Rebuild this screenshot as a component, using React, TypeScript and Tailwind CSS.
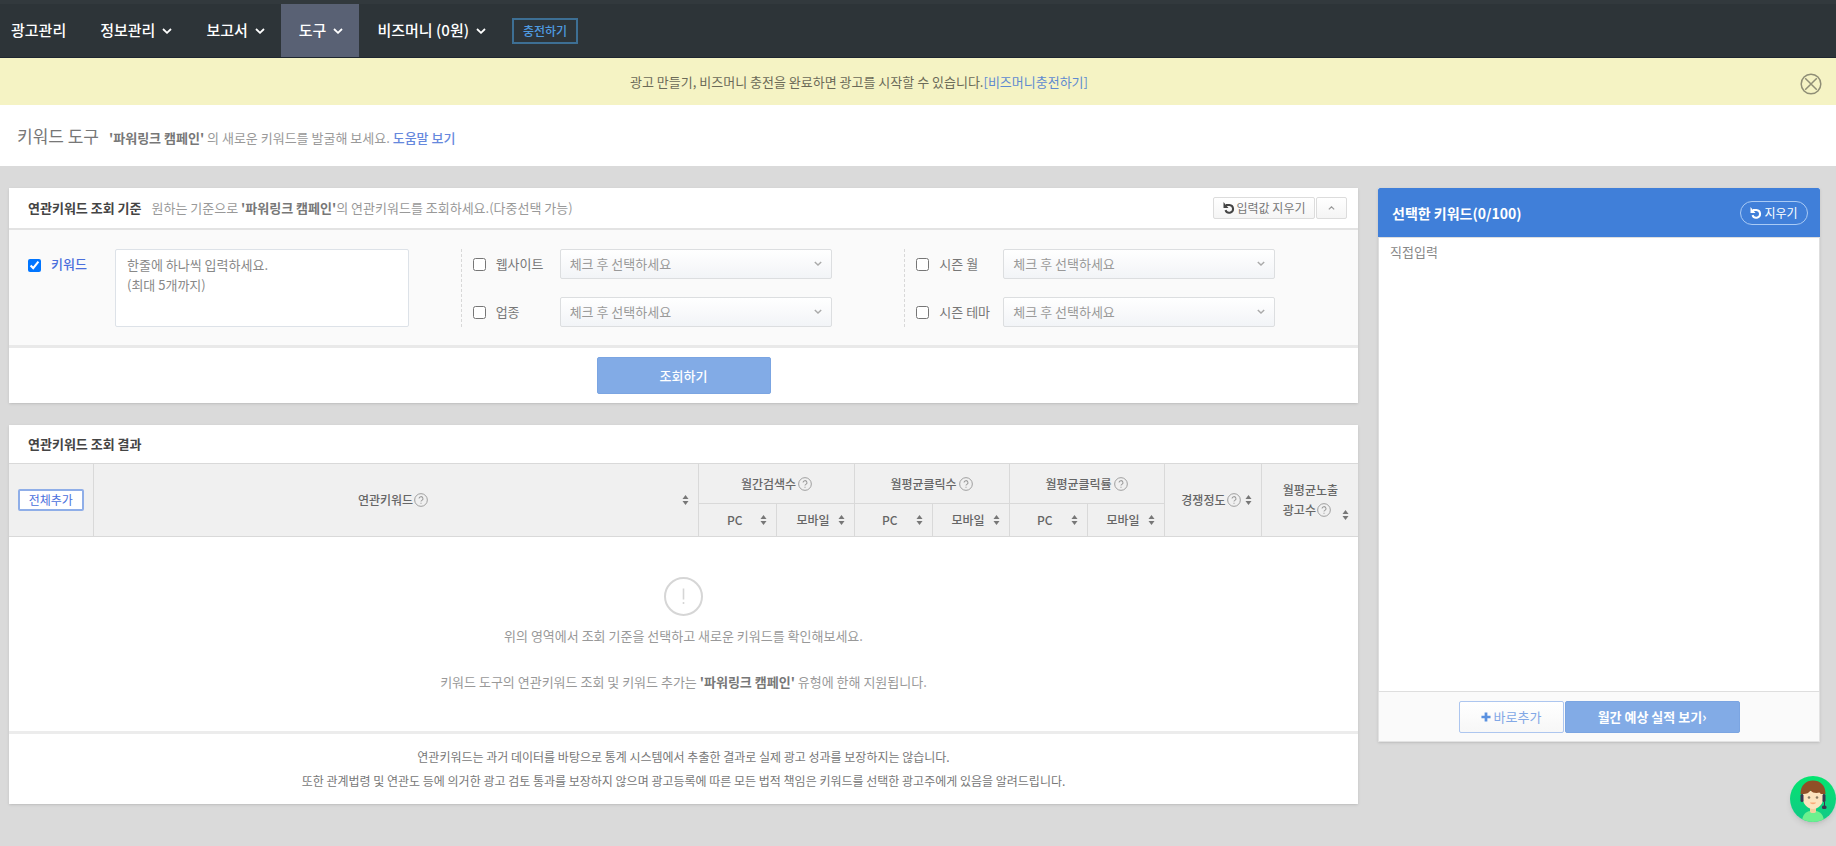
import React, { useState } from 'react';

interface MenuItem {
  label: string;
  active?: boolean;
}

interface Criteria {
  id: string;
  label: string;
}

const MENU: MenuItem[] = [
  { label: '정보관리' },
  { label: '보고서' },
  { label: '도구', active: true },
  { label: '비즈머니 (0원)' },
];

const CRITERIA: Criteria[][] = [
  [
    { id: 'website', label: '웹사이트' },
    { id: 'industry', label: '업종' },
  ],
  [
    { id: 'month', label: '시즌 월' },
    { id: 'theme', label: '시즌 테마' },
  ],
];

const GROUPS = ['월간검색수', '월평균클릭수', '월평균클릭률'];

const Chevron = ({ className }: { className: string }) => (
  <svg className={className} viewBox="0 0 10 6" fill="none" stroke="currentColor" strokeWidth="1.8" aria-hidden="true">
    <path d="M1 1l4 3.8L9 1" />
  </svg>
);

const Undo = ({ className }: { className: string }) => (
  <svg className={className} viewBox="0 0 12 12" fill="none" stroke="currentColor" strokeWidth="2" aria-hidden="true">
    <path d="M3 3h3.4a3.9 3.9 0 1 1-3.9 5.200" />
    <path d="M0.500 0v6h5z" fill="currentColor" stroke="none" />
  </svg>
);

const Help = () => (
  <svg className="inline-block h-[14px] w-[14px] shrink-0 align-middle text-[#999]" viewBox="0 0 15 15" fill="none" stroke="currentColor" aria-hidden="true">
    <circle cx="7.5" cy="7.5" r="6.8" />
    <path d="M5.4 6a2.1 2.1 0 1 1 3 1.900c-.6.3-.9.6-.9 1.300M7.500 10.400v1.200" strokeWidth="1.100" />
  </svg>
);

const Sort = () => (
  <button type="button" aria-label="정렬" className="shrink-0 text-[#777]">
    <svg className="h-[10px] w-[7px]" viewBox="0 0 7 10" fill="currentColor" aria-hidden="true">
      <path d="M3.5 0L6.500 4h-6zM3.500 10L0.500 6h6z" />
    </svg>
  </button>
);

const Nav = () => (
  <nav className="flex h-[58px] items-stretch border-t-4 border-b border-t-[#32393d] border-b-[#1e2630] bg-[#2d3438] pl-[11px] text-[15px] font-medium text-white">
    <a href="#" className="flex items-center pr-4">
      광고관리
    </a>
    {MENU.map(item => (
      <a
        key={item.label}
        href="#"
        className={`flex items-center gap-[7px] pr-4 pl-[18px] ${item.active ? 'bg-[#596174]' : ''}`}
      >
        {item.label}
        <Chevron className="h-[6px] w-[10px]" />
      </a>
    ))}
    <button type="button" className="ml-[10px] h-[26px] w-[66px] self-center border-2 border-[#3d6f94] text-xs text-[#4f9be0]">
      충전하기
    </button>
  </nav>
);

const Notice = ({ onClose }: { onClose: () => void }) => (
  <div className="flex h-[47px] items-center bg-[#f5f3c4] pr-[14px]">
    <p className="flex-1 pl-3 text-center text-[#6b6a58]">
      광고 만들기, 비즈머니 충전을 완료하면 광고를 시작할 수 있습니다.
      <a href="#" className="text-[#5f8ad0]">
        [비즈머니충전하기]
      </a>
    </p>
    <div className="w-[94px]" />
    <button type="button" aria-label="닫기" onClick={onClose} className="pt-1 text-[#8f8e76]">
      <svg className="h-[22px] w-[22px]" viewBox="0 0 22 22" fill="none" stroke="currentColor" strokeWidth="1.5" aria-hidden="true">
        <circle cx="11" cy="11" r="9.8" />
        <path d="M5.2 5.2l11.6 11.6M16.8 5.2L5.2 16.8" />
      </svg>
    </button>
  </div>
);

const SelectRow = ({ id, label }: Criteria) => (
  <div className="flex h-[30px] items-center">
    <input id={id} type="checkbox" className="h-[13px] w-[13px]" />
    <label htmlFor={id} className="w-[74px] pl-[10px] text-[#777]">
      {label}
    </label>
    <div className="relative w-[272px]">
      <select
        aria-label={label}
        className="block h-[30px] w-full appearance-none rounded-xs border border-[#dcdee0] bg-linear-to-b from-white to-[#f2f4f7] px-[9px] text-[#999]"
      >
        <option>체크 후 선택하세요</option>
      </select>
      <Chevron className="pointer-events-none absolute top-3 right-[10px] h-[5px] w-[8px] text-[#aaa]" />
    </div>
  </div>
);

const CriteriaPanel = () => {
  const [open, setOpen] = useState<boolean>(true);
  const [keywords, setKeywords] = useState<string>('');

  return (
    <section className="bg-white shadow-sm">
      <div className="flex h-[42px] items-center border-b-2 border-[#e3e3e3] pr-[11px] pl-[19px]">
        <h2 className="font-bold text-[#444]">연관키워드 조회 기준</h2>
        <p className="flex-1 pl-[10px] text-[#999]">
          원하는 기준으로 <b className="text-[#777]">'파워링크 캠페인'</b>의 연관키워드를 조회하세요.(다중선택 가능)
        </p>
        <button
          type="button"
          onClick={() => setKeywords('')}
          className="flex h-[22px] w-[102px] items-center justify-center gap-[2px] rounded-xs border border-[#dcdcdc] bg-linear-to-b from-white to-[#f5f5f5] text-xs text-[#777]"
        >
          <Undo className="h-[12px] w-[12px] text-[#444]" />
          입력값 지우기
        </button>
        <button
          type="button"
          aria-label="접기"
          onClick={() => setOpen(!open)}
          className="ml-px flex h-[22px] w-[31px] items-center justify-center rounded-xs border border-[#dcdcdc] bg-linear-to-b from-white to-[#f5f5f5] text-[#999]"
        >
          <Chevron className="h-[4px] w-[7px] rotate-180" />
        </button>
      </div>
      {open && (
        <div className="grid grid-cols-3 border-b-3 border-[#e9e9e9] bg-[#fafafa] pt-[19px] pr-[10px] pb-[18px] pl-2">
          <div className="flex pl-[11px]">
            <input id="keyword" type="checkbox" defaultChecked className="mt-[10px] h-[13px] w-[13px]" />
            <label htmlFor="keyword" className="w-[74px] pt-[5px] pl-[10px] font-medium text-[#4a6fdc]">
              키워드
            </label>
            <textarea
              aria-label="키워드 입력"
              value={keywords}
              onChange={e => setKeywords(e.target.value)}
              className="block h-[78px] w-[294px] resize-none rounded-xs border border-[#dde2e8] bg-white px-[11px] py-[5px] leading-5 placeholder:text-[#888]"
              placeholder={'한줄에 하나씩 입력하세요.\n(최대 5개까지)'}
            />
          </div>
          {CRITERIA.map(column => (
            <div key={column[0].id} className="flex flex-col justify-between border-l border-dashed border-[#d8d8d8] pl-[11px]">
              {column.map(item => (
                <SelectRow key={item.id} {...item} />
              ))}
            </div>
          ))}
        </div>
      )}
      <div className="flex h-[55px] items-center justify-center">
        <button type="button" className="h-[37px] w-[174px] rounded-xs border border-[#7ba5e2] bg-[#82abe6] font-medium text-white">
          조회하기
        </button>
      </div>
    </section>
  );
};

const ResultPanel = () => (
  <section className="bg-white shadow-sm">
    <h2 className="flex h-[38px] items-center pl-[19px] font-bold text-[#444]">연관키워드 조회 결과</h2>
    <table className="w-full table-fixed border-collapse text-xs text-[#666]">
      <colgroup>
        <col className="w-[84px]" />
        <col />
        <col className="w-[78px]" />
        <col className="w-[77px]" />
        <col className="w-[78px]" />
        <col className="w-[77px]" />
        <col className="w-[78px]" />
        <col className="w-[77px]" />
        <col className="w-[97px]" />
        <col className="w-[97px]" />
      </colgroup>
      <thead className="border-y border-[#d9d9d9] bg-[#f0f0f0]">
        <tr className="h-[40px]">
          <th rowSpan={2}>
            <button type="button" className="h-[22px] w-[66px] rounded-xs border-2 border-[#8faee8] bg-white font-normal text-[#4a6fdc]">
              전체추가
            </button>
          </th>
          <th rowSpan={2} className="border-l border-[#d9d9d9] font-medium">
            <div className="flex items-center pr-[9px] pl-[10px]">
              <span className="flex flex-1 items-center justify-center gap-px">
                연관키워드
                <Help />
              </span>
              <Sort />
            </div>
          </th>
          {GROUPS.map(group => (
            <th key={group} colSpan={2} className="border border-t-0 border-[#d9d9d9] font-medium">
              <span className="flex items-center justify-center gap-[2px]">
                {group}
                <Help />
              </span>
            </th>
          ))}
          <th rowSpan={2} className="border-l border-[#d9d9d9] font-medium">
            <span className="flex items-center justify-end gap-[4px] pr-[9px]">
              <span className="flex items-center gap-px">
                경쟁정도
                <Help />
              </span>
              <Sort />
            </span>
          </th>
          <th rowSpan={2} className="border-l border-[#d9d9d9] font-medium">
            <div className="flex items-end justify-end gap-1 pr-[9px] text-left leading-5">
              <span>
                월평균노출
                <span className="flex items-center gap-px">
                  광고수
                  <Help />
                </span>
              </span>
              <Sort />
            </div>
          </th>
        </tr>
        <tr className="h-[33px]">
          {GROUPS.map(group => (
            <React.Fragment key={group}>
              <th className="border-l border-[#d9d9d9] font-medium">
                <span className="flex items-center justify-end gap-[18px] pr-[9px]">
                  PC
                  <Sort />
                </span>
              </th>
              <th className="border-l border-[#d9d9d9] font-medium">
                <span className="flex items-center justify-end gap-[8px] pr-[9px]">
                  모바일
                  <Sort />
                </span>
              </th>
            </React.Fragment>
          ))}
        </tr>
      </thead>
      <tbody>
        <tr>
          <td colSpan={10} className="h-[196px] border-b-3 border-[#ececec] text-center text-[13px] text-[#999]">
            <svg className="mx-auto mb-[10px] h-[39px] w-[39px] text-[#d6d6d6]" viewBox="0 0 39 39" fill="none" stroke="currentColor" aria-hidden="true">
              <circle cx="19.5" cy="19.5" r="18.5" strokeWidth="2" />
              <path d="M19.5 11.5v11M19.5 25v2" strokeWidth="1.6" />
            </svg>
            <p className="mb-[26px] leading-5">위의 영역에서 조회 기준을 선택하고 새로운 키워드를 확인해보세요.</p>
            <p className="leading-5">
              키워드 도구의 연관키워드 조회 및 키워드 추가는 <b className="text-[#777]">'파워링크 캠페인'</b> 유형에 한해 지원됩니다.
            </p>
          </td>
        </tr>
      </tbody>
    </table>
    <p className="py-[11px] text-center text-xs leading-6 text-[#777]">
      연관키워드는 과거 데이터를 바탕으로 통계 시스템에서 추출한 결과로 실제 광고 성과를 보장하지는 않습니다.
      <br />
      또한 관계법령 및 연관도 등에 의거한 광고 검토 통과를 보장하지 않으며 광고등록에 따른 모든 법적 책임은 키워드를 선택한 광고주에게 있음을 알려드립니다.
    </p>
  </section>
);

const SelectedPanel = () => {
  const [selected, setSelected] = useState<string>('');

  return (
    <aside className="w-[442px] shrink-0 bg-white shadow-sm">
      <div className="flex h-[49px] items-center justify-between rounded-t-xs bg-[#407fd9] pr-3 pl-[14px] text-white">
        <h2 className="text-sm font-bold">선택한 키워드(0/100)</h2>
        <button
          type="button"
          onClick={() => setSelected('')}
          className="flex h-6 w-[68px] items-center justify-center gap-[2px] rounded-full border border-[#a9caf5] text-xs"
        >
          <Undo className="h-[12px] w-[12px]" />
          지우기
        </button>
      </div>
      <textarea
        aria-label="선택한 키워드"
        value={selected}
        onChange={e => setSelected(e.target.value)}
        placeholder="직접입력"
        className="block h-[455px] w-full resize-none border border-[#dedede] px-[11px] py-1 leading-5 placeholder:text-[#888]"
      />
      <div className="flex h-[50px] items-center justify-center gap-px border-x border-b border-[#e3e3e3] bg-[#fafafa]">
        <button
          type="button"
          className="flex h-8 w-[105px] items-center justify-center gap-[3px] rounded-xs border border-[#adc6ef] bg-linear-to-b from-white to-[#f7f7f7] text-[#82a8e6]"
        >
          <svg className="h-[10px] w-[10px] text-[#5a91e0]" viewBox="0 0 11 11" stroke="currentColor" strokeWidth="3" aria-hidden="true">
            <path d="M5.5 0.5v10M0.5 5.5h10" />
          </svg>
          바로추가
        </button>
        <button type="button" className="h-8 w-[175px] rounded-xs border border-[#7ba5e2] bg-[#82abe6] font-bold text-white">
          월간 예상 실적 보기›
        </button>
      </div>
    </aside>
  );
};

const ChatButton = () => (
  <button type="button" aria-label="상담" className="fixed right-0 bottom-6 h-[46px] w-[46px] rounded-full shadow-md">
    <svg className="h-full w-full" viewBox="0 0 46 46" aria-hidden="true">
      <defs>
        <linearGradient id="chat" x1="0" y1="0" x2="0" y2="1">
          <stop offset="0" stopColor="#03e56f" />
          <stop offset="1" stopColor="#12c888" />
        </linearGradient>
        <clipPath id="round">
          <circle cx="23" cy="23" r="23" />
        </clipPath>
      </defs>
      <g clipPath="url(#round)">
        <rect width="46" height="46" fill="url(#chat)" />
        <path d="M12 46c0-7 4-10.500 8-11h6c4 .5 8 4 8 11z" fill="#6cf08e" />
        <path d="M20 30h6v5.500c0 2-6 2-6 0z" fill="#f3cf9f" />
        <path d="M13 15h20v8c0 5.500-5 10-10 10s-10-4.500-10-10z" fill="#fde3bd" />
        <path d="M10.500 18C10.500 9 16 4.500 23 4.500S35.500 9 35.500 18h-3c-1.500 0-2.500-.5-3-1.500-3 1-7 .5-9-2-1.500 2.500-4 3.500-7 3.500z" fill="#8f5027" />
        <rect x="10.500" y="18" width="3" height="8" rx="1.500" fill="#3c3550" />
        <rect x="32.500" y="18" width="3" height="8" rx="1.500" fill="#3c3550" />
        <path d="M34.500 26v4.500" stroke="#3c3550" />
        <rect x="32" y="29.500" width="4.500" height="3.500" rx="1.500" fill="#3c3550" />
        <circle cx="19" cy="21.500" r="1.300" fill="#8c7a62" />
        <circle cx="27" cy="21.500" r="1.300" fill="#8c7a62" />
        <path d="M20 26.500h6c-.5 2.200-5.500 2.200-6 0z" fill="#fba978" />
      </g>
    </svg>
  </button>
);

const App = () => {
  const [notice, setNotice] = useState<boolean>(true);

  return (
    <div className="min-h-screen bg-[#dadada] font-['Noto_Sans_CJK_KR','Noto_Sans',sans-serif] text-[13px]">
      <Nav />
      {notice && <Notice onClose={() => setNotice(false)} />}
      <header className="flex h-[61px] items-center gap-[10px] bg-white pl-[17px]">
        <h1 className="text-[17px] text-[#777]">키워드 도구</h1>
        <p className="pt-1 text-[#999]">
          <b className="text-[#777]">'파워링크 캠페인'</b> 의 새로운 키워드를 발굴해 보세요.{' '}
          <a href="#" className="font-medium text-[#6688dd]">
            도움말 보기
          </a>
        </p>
      </header>
      <main className="flex items-start gap-5 pt-[22px] pr-4 pb-10 pl-[9px]">
        <div className="flex min-w-0 flex-1 flex-col gap-[22px]">
          <CriteriaPanel />
          <ResultPanel />
        </div>
        <SelectedPanel />
      </main>
      <ChatButton />
    </div>
  );
};

export default App;
